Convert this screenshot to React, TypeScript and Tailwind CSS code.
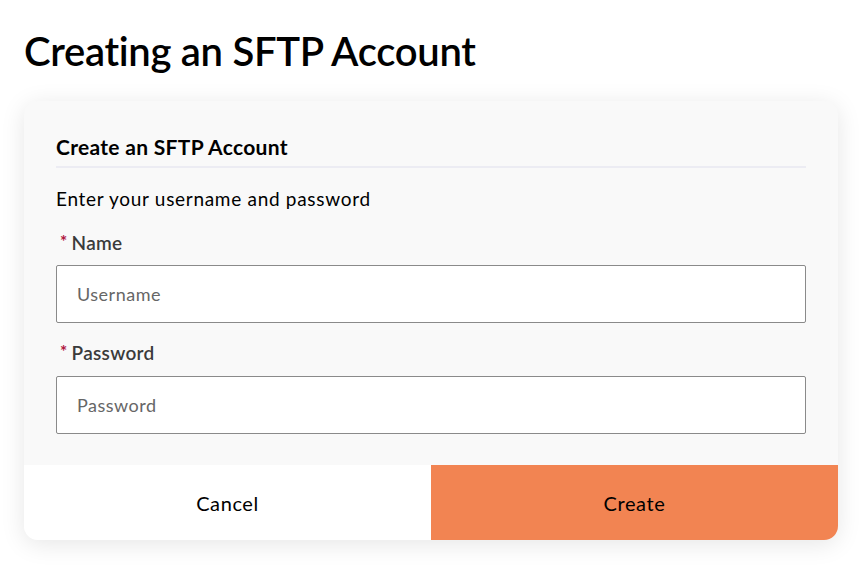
export default function App() {
  return (
    <div className="min-h-[565px] w-[860px] bg-white px-6 pt-[27px] font-['Lato',sans-serif] text-black">
      <h1 className="text-[40px] font-semibold leading-[48px] tracking-[-0.3px]">Creating an SFTP Account</h1>

      <div className="mt-[26px] w-[814px] overflow-hidden rounded-[14px] bg-[#f9f9f9] shadow-[0_4px_24px_rgba(0,0,0,0.10)]">
        <div className="px-8 pt-[34px] pb-[31px]">
          <h2 className="border-b-2 border-[#ececf3] pb-[7px] text-[21px] font-bold leading-[24px] tracking-[0.3px]">
            Create an SFTP Account
          </h2>
          <p className="mt-[19px] text-[19px] leading-[24px] tracking-[0.7px]">Enter your username and password</p>

          <label className="mt-[20px] flex items-center gap-[4px] pl-[4px] text-[19px] font-semibold leading-[24px] tracking-[0.3px] text-[#3b3b3b]">
            <span className="-mt-[3px] text-[17px] font-bold leading-[15px] text-[#b0163f]">*</span>
            Name
          </label>
          <input
            placeholder="Username"
            className="mt-[10px] h-[58px] w-full rounded-[2px] border border-[#8a8a8a] bg-white px-[20px] text-[18px] tracking-[0.5px] placeholder:text-[#666666] outline-none"
          />

          <label className="mt-[18px] flex items-center gap-[4px] pl-[4px] text-[19px] font-semibold leading-[24px] tracking-[0.3px] text-[#3b3b3b]">
            <span className="-mt-[3px] text-[17px] font-bold leading-[15px] text-[#b0163f]">*</span>
            Password
          </label>
          <input
            placeholder="Password"
            className="mt-[11px] h-[58px] w-full rounded-[2px] border border-[#8a8a8a] bg-white px-[20px] text-[18px] tracking-[0.5px] placeholder:text-[#666666] outline-none"
          />
        </div>

        <div className="grid h-[75px] grid-cols-2">
          <button className="bg-white text-[20px] tracking-[0.6px]">Cancel</button>
          <button className="bg-[#f28452] text-[20px] tracking-[0.6px]">Create</button>
        </div>
      </div>
    </div>
  );
}
